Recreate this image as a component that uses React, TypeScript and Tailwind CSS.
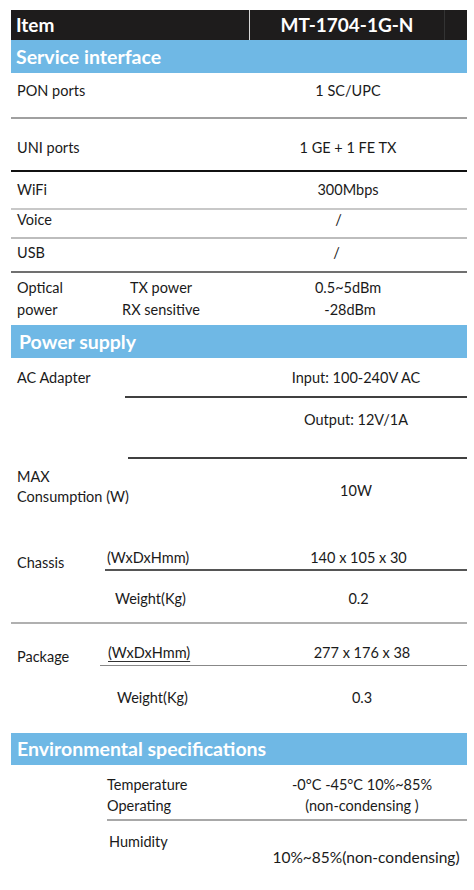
import React from "react";

const Bar = ({ children, pl }: { children: React.ReactNode; pl: string }) => (
  <div className={`flex items-center bg-[#6fb8e5] text-white font-bold text-[19.5px] ${pl}`}>{children}</div>
);

export default function App() {
  return (
    <div className="w-[474px] h-[890px] bg-white pt-[10px] pl-[11px] pr-[7px] font-['Lato',sans-serif] text-[14.5px] leading-[20px] text-[#1a1a1a]">
      {/* Header */}
      <div className="flex h-[30px] bg-[#1e1c1c] text-white font-bold text-[19px]">
        <div className="w-[239px] pl-[5px] flex items-center border-r border-[#d8d8d8]">Item</div>
        <div className="flex-1 flex items-center justify-center">MT-1704-1G-N</div>
        <div className="w-[23px] border-l border-[#333]"></div>
      </div>
      <Bar pl="pl-[5px] h-[33px]">Service interface</Bar>

      {/* PON */}
      <div className="flex h-[46px] pt-[8px] border-b-2 border-[#a0a0a0]">
        <div className="w-[239px] pl-[6px]">PON ports</div>
        <div className="flex-1 text-center pr-[21px]">1 SC/UPC</div>
      </div>
      <div className="flex h-[53px] pt-[19px] border-b-2 border-[#111]">
        <div className="w-[239px] pl-[6px]">UNI ports</div>
        <div className="flex-1 text-center pr-[21px]">1 GE + 1 FE TX</div>
      </div>
      <div className="flex h-[38px] pt-[8px] border-b-2 border-[#c8c8c8]">
        <div className="w-[239px] pl-[6px]">WiFi</div>
        <div className="flex-1 text-center pr-[21px]">300Mbps</div>
      </div>
      <div className="flex h-[29px] pt-0 border-b-2 border-[#bdbdbd]">
        <div className="w-[239px] pl-[6px]">Voice</div>
        <div className="flex-1 text-center pr-[40px]">/</div>
      </div>
      <div className="flex h-[34px] pt-[4px] border-b-2 border-[#707070]">
        <div className="w-[239px] pl-[6px]">USB</div>
        <div className="flex-1 text-center pr-[44px]">/</div>
      </div>
      <div className="flex h-[52px] pt-[4px] leading-[22px]">
        <div className="w-[100px] pl-[6px]">
          <div>Optical</div>
          <div>power</div>
        </div>
        <div className="w-[139px] pr-[39px] text-center">
          <div>TX power</div>
          <div>RX sensitive</div>
        </div>
        <div className="flex-1 text-center pr-[21px]">
          <div>0.5~5dBm</div>
          <div className="pl-[4px]">-28dBm</div>
        </div>
      </div>

      <Bar pl="pl-[8px] h-[33px]">Power supply</Bar>

      {/* AC adapter */}
      <div className="flex">
        <div className="w-[114px] pl-[6px] pt-[10px]">AC Adapter</div>
        <div className="flex-1 flex flex-col">
          <div className="flex h-[40px] pt-[10px] border-b-2 border-[#404040]">
            <div className="w-[125px]"></div>
            <div className="flex-1 text-center pr-[5px]">Input: 100-240V AC</div>
          </div>
          <div className="flex h-[61px] pt-[12px] ml-[3px] border-b-2 border-[#404040]">
            <div className="w-[122px]"></div>
            <div className="flex-1 text-center pr-[5px]">Output: 12V/1A</div>
          </div>
        </div>
      </div>

      {/* MAX */}
      <div className="flex h-[81px]">
        <div className="w-[239px] pl-[6px] pt-[8px]">
          <div>MAX</div>
          <div>Consumption (W)</div>
        </div>
        <div className="flex-1 text-center pt-[22px] pr-[5px]">10W</div>
      </div>

      {/* Chassis */}
      <div className="flex h-[84px] border-b-2 border-[#b0b0b0]">
        <div className="w-[94px] pl-[6px] pt-[13px]">Chassis</div>
        <div className="flex-1 flex flex-col">
          <div className="flex h-[31px] pt-[8px] border-b-2 border-[#555]">
            <div className="w-[145px] pl-[2px]">(WxDxHmm)</div>
            <div className="flex-1 text-center">140 x 105 x 30</div>
          </div>
          <div className="flex pt-[18px]">
            <div className="w-[145px] pl-[10px]">Weight(Kg)</div>
            <div className="flex-1 text-center">0.2</div>
          </div>
        </div>
      </div>

      {/* Package */}
      <div className="flex h-[109px]">
        <div className="w-[89px] pl-[6px] pt-[23px]">Package</div>
        <div className="flex-1 flex flex-col">
          <div className="flex h-[42px] pt-[19px] border-b border-[#888]">
            <div className="w-[150px] pl-[8px]">
              <span className="underline underline-offset-[3px] decoration-[#333]">(WxDxHmm)</span>
            </div>
            <div className="flex-1 text-center pl-[7px]">277 x 176 x 38</div>
          </div>
          <div className="flex pt-[22px]">
            <div className="w-[150px] pl-[17px]">Weight(Kg)</div>
            <div className="flex-1 text-center pl-[7px]">0.3</div>
          </div>
        </div>
      </div>

      <Bar pl="pl-[6px] h-[32px]">Environmental specifications</Bar>

      {/* Env */}
      <div className="flex">
        <div className="w-[96px]"></div>
        <div className="flex-1 flex flex-col">
          <div className="flex h-[56px] pt-[9px] leading-[21px] border-b-2 border-[#a8a8a8]">
            <div className="w-[143px]">
              <div>Temperature</div>
              <div>Operating</div>
            </div>
            <div className="flex-1 text-center pl-[7px]">
              <div>-0°C -45°C 10%~85%</div>
              <div>(non-condensing )</div>
            </div>
          </div>
          <div className="flex">
            <div className="w-[143px] pl-[2px] pt-[11px]">Humidity</div>
            <div className="flex-1 text-center pl-[15px] pt-[26px] whitespace-nowrap text-[15.5px]">10%~85%(non-condensing)</div>
          </div>
        </div>
      </div>
    </div>
  );
}
